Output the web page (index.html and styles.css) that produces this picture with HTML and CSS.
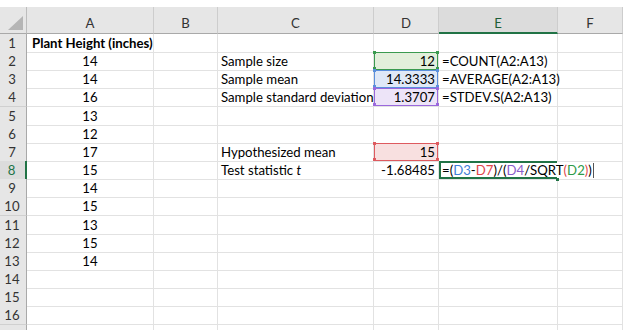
FILE: index.html
```html
<html><head>
<meta charset="utf-8">
<title>One-sample t test</title>
<link rel="stylesheet" href="styles.css">
</head>
<body>
<div class="sheet">

<div class="row head">
<div class="corner"></div><div class="h">A</div><div class="h">B</div><div class="h">C</div><div class="h">D</div><div class="h sel">E</div><div class="h">F</div>
</div>

<div class="row">
<div class="n">1</div><div class="c b">Plant Height (inches)</div><div class="c"></div><div class="c"></div><div class="c"></div><div class="c"></div><div class="c"></div>
</div>
<div class="row">
<div class="n">2</div><div class="c m">14</div><div class="c"></div><div class="c">Sample size</div><div class="c r ref green">12</div><div class="c">=COUNT(A2:A13)</div><div class="c"></div>
</div>
<div class="row">
<div class="n">3</div><div class="c m">14</div><div class="c"></div><div class="c">Sample mean</div><div class="c r ref blue">14.3333</div><div class="c">=AVERAGE(A2:A13)</div><div class="c"></div>
</div>
<div class="row">
<div class="n">4</div><div class="c m">16</div><div class="c"></div><div class="c">Sample standard deviation</div><div class="c r ref purple">1.3707</div><div class="c">=STDEV.S(A2:A13)</div><div class="c"></div>
</div>
<div class="row">
<div class="n">5</div><div class="c m">13</div><div class="c"></div><div class="c"></div><div class="c"></div><div class="c"></div><div class="c"></div>
</div>
<div class="row">
<div class="n">6</div><div class="c m">12</div><div class="c"></div><div class="c"></div><div class="c"></div><div class="c"></div><div class="c"></div>
</div>
<div class="row">
<div class="n">7</div><div class="c m">17</div><div class="c"></div><div class="c">Hypothesized mean</div><div class="c r ref red">15</div><div class="c"></div><div class="c"></div>
</div>
<div class="row">
<div class="n cur">8</div><div class="c m">15</div><div class="c"></div><div class="c">Test statistic <i>t</i></div><div class="c r">-1.68485</div><div class="c edit">=(<span class="fb">D3</span>-<span class="fr">D7</span>)/(<span class="fp">D4</span>/SQRT<span class="fr">(</span><span class="fg">D2</span><span class="fr">)</span>)<span class="caret"></span></div><div class="c"></div>
</div>
<div class="row">
<div class="n">9</div><div class="c m">14</div><div class="c"></div><div class="c"></div><div class="c"></div><div class="c"></div><div class="c"></div>
</div>
<div class="row">
<div class="n">10</div><div class="c m">15</div><div class="c"></div><div class="c"></div><div class="c"></div><div class="c"></div><div class="c"></div>
</div>
<div class="row">
<div class="n">11</div><div class="c m">13</div><div class="c"></div><div class="c"></div><div class="c"></div><div class="c"></div><div class="c"></div>
</div>
<div class="row">
<div class="n">12</div><div class="c m">15</div><div class="c"></div><div class="c"></div><div class="c"></div><div class="c"></div><div class="c"></div>
</div>
<div class="row">
<div class="n">13</div><div class="c m">14</div><div class="c"></div><div class="c"></div><div class="c"></div><div class="c"></div><div class="c"></div>
</div>
<div class="row">
<div class="n">14</div><div class="c"></div><div class="c"></div><div class="c"></div><div class="c"></div><div class="c"></div><div class="c"></div>
</div>
<div class="row">
<div class="n">15</div><div class="c"></div><div class="c"></div><div class="c"></div><div class="c"></div><div class="c"></div><div class="c"></div>
</div>
<div class="row">
<div class="n">16</div><div class="c"></div><div class="c"></div><div class="c"></div><div class="c"></div><div class="c"></div><div class="c"></div>
</div>
<div class="row">
<div class="n"></div><div class="c"></div><div class="c"></div><div class="c"></div><div class="c"></div><div class="c"></div><div class="c"></div>
</div>

</div>
</body></html>
```

FILE: styles.css
```css
body {margin: 0; background: white; overflow: hidden; font-family: Lato, "Open Sans", sans-serif; font-size: 13.2px; color: #000}

.sheet {margin-top: 7px; width: 623px}

.row {display: grid; grid-template-columns: 27px 127px 64px 156px 65px 119px 65px; height: 18.17px}
.row.head {height: 27px}

.row > div {box-sizing: border-box; white-space: nowrap; position: relative}

/* column letters */
.corner {background: #e6e6e6; border-right: 1px solid #bdbdbd; border-bottom: 1px solid #a9a9a9}
.corner::after {content: ""; position: absolute; right: 3px; bottom: 3px; width: 0; height: 0;
  border-left: 15px solid transparent; border-bottom: 14px solid #b5b5b5}
.h {background: #e6e6e6; border-right: 1px solid #cdcdcd; border-bottom: 1px solid #a9a9a9;
  text-align: center; color: #333; padding-top: 7px; line-height: 18px}
.h.sel {background: #dcdcdc; border-bottom: 2px solid #217346; color: #1e5e38}

/* row numbers */
.n {background: #e6e6e6; border-right: 1px solid #a9a9a9; border-bottom: 1px solid #d0d0d0;
  text-align: center; color: #333; line-height: 18px; padding-right: 2px}
.n.cur {background: #dcdcdc; border-right: 2px solid #217346; color: #217346}

/* cells */
.c {border-right: 1px solid #e2e2e2; border-bottom: 1px solid #e2e2e2; padding: 0 3px; line-height: 18px}
.b {font-weight: bold; padding-left: 5px}
.m {text-align: center}
.r {text-align: right}

/* range highlights */
.ref {box-shadow: inset 0 0 0 1px var(--line); background: var(--fill)}
.ref::before {content: ""; position: absolute; left: -1px; top: -1px; width: 3px; height: 3px;
  background: var(--line); box-shadow: 63px 0 var(--line), 0 16px var(--line), 63px 16px var(--line)}
.green {--line: #3a9a4f; --fill: #e2efdb}
.blue {--line: #5b8fdc; --fill: #dfe8f7}
.purple {--line: #9a68dc; --fill: #ede4f8}
.red {--line: #de5a5f; --fill: #f8e0e0}

/* cell being edited: text runs on into F */
.edit {overflow: visible; z-index: 2; border-right-color: transparent;
  box-shadow: inset 2px 0 0 #217346, inset 0 2px 0 #217346, inset 0 -2px 0 #217346}
.edit::after {content: ""; position: absolute; right: -2px; bottom: -2px; width: 3px; height: 3px;
  background: #217346}
.fb {color: #3f7fd8}
.fr {color: #e0464b}
.fp {color: #8a5cc9}
.fg {color: #2e9a48}
.caret {display: inline-block; width: 1px; height: 15px; background: #555; vertical-align: -3px; margin-left: 1px}
```
